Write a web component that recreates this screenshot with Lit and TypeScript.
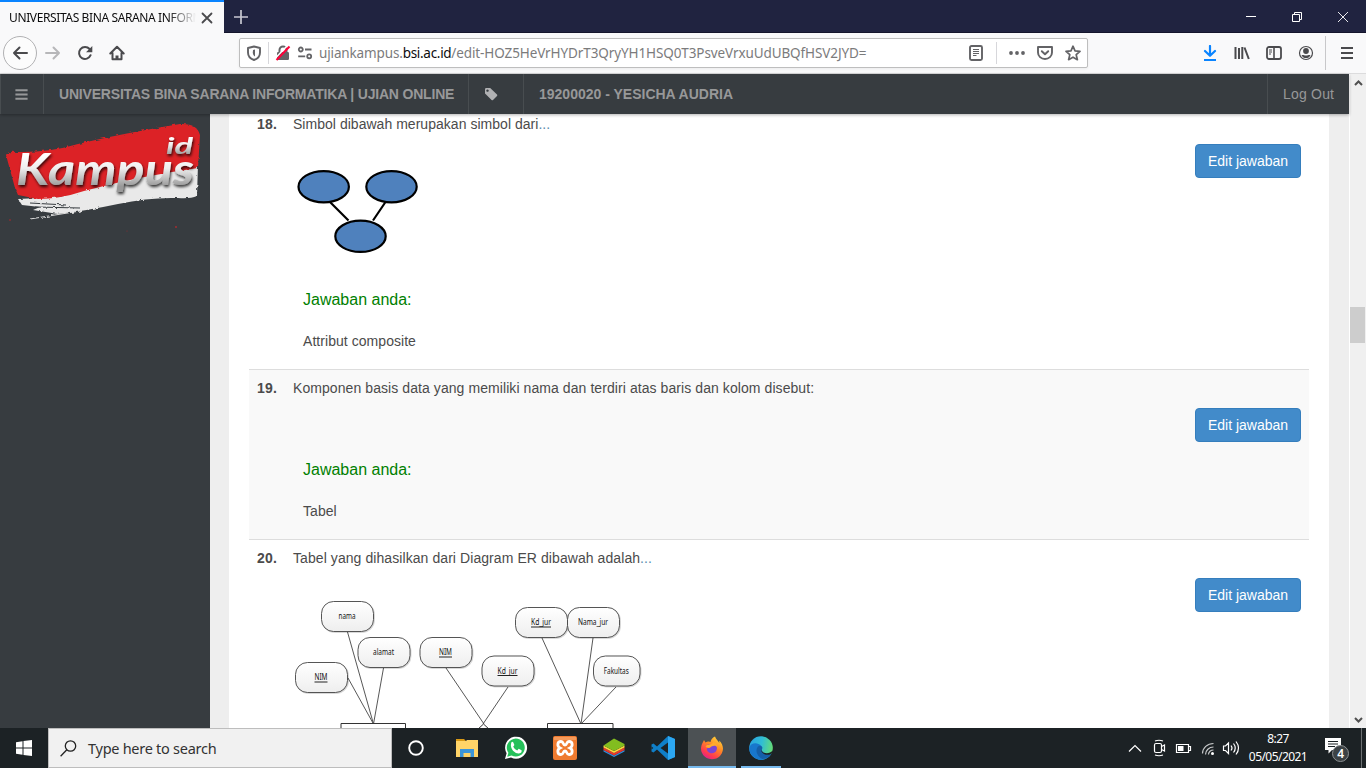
import { LitElement, html, svg, css } from "lit";
import { customElement } from "lit/decorators.js";

const icon = (body: unknown, size = 16, cls = "") => html`
  <svg class="ic ${cls}" width=${size} height=${size} viewBox="0 0 16 16">${body}</svg>
`;

const st = (d: string, w = 2, c = "currentColor") =>
  svg`<path d=${d} fill="none" stroke=${c} stroke-width=${w} stroke-linecap="round" stroke-linejoin="round"/>`;

const ICONS = {
  back: svg`${st("M15 8H2M7.5 2.5 2 8l5.500 5.500")}`,
  forward: svg`${st("M1 8h13M8.500 2.500 14 8l-5.500 5.500")}`,
  reload: svg`${st("M13.600 10.200A6 6 0 1 1 12.600 4")}<path d="M15.300 1v6.300H9z" fill="currentColor"/>`,
  home: svg`${st("M1.300 8.500 8 1.800l6.700 6.700M3.500 8v6.200h9V8")}<path d="M6.500 15v-4.500h3V15z" fill="currentColor"/>`,
  shield: svg`${st("M8 1.500 14 3V7.500C14 11.500 11 14 8 15 5 14 2 11.500 2 7.500V3z", 1.9)}<path d="M7 5 9 4.500v7c-1.500-.700-2.200-2.200-2.200-3.900z" fill="currentColor"/>`,
  lock: svg`<path d="M4.500 8V5a3.500 3.500 0 0 1 7 0v3" fill="none" stroke="currentColor" stroke-width="2"/><rect x="2" y="7" width="12" height="8" rx="1.200" fill="currentColor"/><path d="M0.500 13 12.500 .500" stroke="#fff" stroke-width="1.500"/><path d="M1.500 15 14.500 1.500" stroke="#ff0039" stroke-width="2"/>`,
  perms: svg`<g fill="none" stroke="currentColor" stroke-width="1.800"><circle cx="3.800" cy="4.500" r="2"/><path d="M8 4.500h6.500M1.200 11.300h7"/><circle cx="12.200" cy="11.300" r="2"/></g>`,
  reader: svg`<rect x="2" y="1" width="12" height="14" rx="1.500" fill="none" stroke="currentColor" stroke-width="1.900"/><path d="M5 4.500h6M5 6.500h6M5 8.500h6M5 10.500h3.500" stroke="currentColor"/>`,
  dots: svg`<g fill="currentColor"><circle cx="2" cy="8" r="1.900"/><circle cx="8" cy="8" r="1.900"/><circle cx="14" cy="8" r="1.900"/></g>`,
  pocket: svg`${st("M1 2h14v5.500a7 6.500 0 0 1-14 0z", 1.900)}${st("M4.800 6.200 8 9.300l3.200-3.100", 1.900)}`,
  star: svg`${st("M8 1.200 10 5.800l5 .500-3.800 3.400 1.200 5L8 12.200 3.600 14.700l1.200-5L1 6.300l5-.500z", 1.700)}`,
  download: svg`${st("M8 1v9.500M3 6l5 4.800L13 6", 2.200)}<path d="M2 15h12" stroke="currentColor" stroke-width="2"/>`,
  library: svg`<path d="M1.500 2v12M5 3v11M8.300 2v12M10.500 2.500l4.300 11.500" stroke="currentColor" stroke-width="2" fill="none"/>`,
  sidebar: svg`<rect x="1" y="2" width="14" height="12" rx="2" fill="none" stroke="currentColor" stroke-width="1.800"/><path d="M8 2v12" stroke="currentColor" stroke-width="1.600"/><path d="M3 5h3M3 7h3M3 9h2" stroke="currentColor"/>`,
  account: svg`<circle cx="8" cy="8" r="6.500" fill="none" stroke="currentColor" stroke-width="1.200"/><circle cx="8" cy="6" r="2.900" fill="currentColor"/><path d="M3.500 10.200c1.500-.800 2.500.300 4.500.300s3-1.100 4.500-.300C11.500 12.300 10 13 8 13s-3.500-.700-4.500-2.800z" fill="currentColor"/>`,
  menu: svg`<path d="M2 3h12M2 8h12M2 13h12" stroke="currentColor" stroke-width="1.900"/>`,
  bars: svg`<path d="M1.500 3.500h13M1.500 8h13M1.500 12.500h13" stroke="currentColor" stroke-width="2.100"/>`,
  tag: svg`<path fill-rule="evenodd" d="M1 3.200Q1 2 2.200 2h4l6.800 6.600q.700.700 0 1.400L9 14q-.700.700-1.400 0L1 7.500zM3.500 3.400a1.200 1.200 0 1 0 .01 0z" fill="currentColor"/>`,
  close: svg`${st("M3.500 3.500l9 9M12.500 3.500l-9 9", 1.800)}`,
  plus: svg`<path d="M8 1v14M1 8h14" stroke="currentColor" stroke-width="1.700"/>`,
  min: svg`<path d="M3 7.500h10" stroke="currentColor"/>`,
  restore: svg`<path d="M3.500 5.500h7v7h-7zM5.500 5V3.500h7v7H11" fill="none" stroke="currentColor"/>`,
  x: svg`<path d="M3 3l10 10M13 3 3 13" stroke="currentColor" stroke-width=".9"/>`,
};

@customElement("browser-chrome")
class BrowserChrome extends LitElement {
  static styles = css`
    :host { display: block; font-family: "Noto Sans", "Open Sans", sans-serif; color: #4a4a4d; }
    svg { display: block; flex: none; }
    .tabs { height: 33px; background: #202340; display: flex; align-items: stretch; box-shadow: inset 0 -1px #14152c; }
    .tab { width: 224px; box-sizing: border-box; background: #f9f9fa; border-top: 2px solid #0a84ff; padding: 0 9px; display: flex; align-items: center; }
    .title { width: 187px; height: 20px; line-height: 20px; overflow: hidden; white-space: nowrap; font-size: 12px; letter-spacing: -0.38px; color: #0c0c0d; margin-right: 3px; -webkit-mask-image: linear-gradient(90deg, #000 85%, transparent); mask-image: linear-gradient(90deg, #000 85%, transparent); }
    .new { color: #c8c8d2; display: flex; align-items: center; padding-left: 9px; flex: 1; }
    .win { width: 46px; display: grid; place-items: center; color: #fff; }
    .bar { height: 40px; background: #f9f9fa; border-bottom: 1px solid #dcdcdd; display: flex; align-items: center; gap: 16px; padding: 0 11px 0 3px; }
    .round { width: 32px; height: 32px; border: 1px solid #b1b1b3; border-radius: 50%; display: grid; place-items: center; background: #fcfcfc; }
    .fwd { margin-left: -8px; color: #b7b7b9; }
    .url { flex: 1; margin: 0 98px; height: 28px; border: 1px solid #bebebe; border-radius: 2px; background: #fff; box-shadow: 0 1px 3px rgba(0,0,0,.06); display: flex; align-items: center; gap: 6px; padding: 0 6px; color: #636366; }
    .sep { width: 1px; height: 22px; background: #d7d7db; }
    .addr { flex: 1; font-size: 13.500px; letter-spacing: -0.1px; color: #7b7b7c; white-space: nowrap; line-height: 20px; }
    .addr .sub { letter-spacing: -0.14px; }
    .addr b { font-weight: 400; color: #0c0c0d; letter-spacing: -0.3px; }
    .acts { display: flex; align-items: center; gap: 12px; }
    .dl { color: #0a84ff; }
    .bar > .sep { height: 34px; margin: 0 -3px 0 -5px; background: #c8c8ca; }
  `;
  render() {
    return html`
      <div class="tabs">
        <div class="tab"><span class="title">UNIVERSITAS BINA SARANA INFORMATIKA</span>${icon(ICONS.close)}</div>
        <div class="new">${icon(ICONS.plus)}</div>
        <div class="win">${icon(ICONS.min)}</div>
        <div class="win">${icon(ICONS.restore)}</div>
        <div class="win">${icon(ICONS.x)}</div>
      </div>
      <div class="bar">
        <span class="round">${icon(ICONS.back)}</span>
        ${icon(ICONS.forward, 16, "fwd")} ${icon(ICONS.reload)} ${icon(ICONS.home)}
        <div class="url">
          ${icon(ICONS.shield)}<span class="sep"></span>${icon(ICONS.lock)}${icon(ICONS.perms)}
          <span class="addr"><span class="sub">ujiankampus.</span><b>bsi.ac.id</b>/edit-HOZ5HeVrHYDrT3QryYH1HSQ0T3PsveVrxuUdUBQfHSV2JYD=</span>
          <div class="acts">${icon(ICONS.reader)}<span class="sep"></span>${icon(ICONS.dots)}${icon(ICONS.pocket)}${icon(ICONS.star)}</div>
        </div>
        ${icon(ICONS.download, 16, "dl")} ${icon(ICONS.library)} ${icon(ICONS.sidebar)} ${icon(ICONS.account)}
        <span class="sep"></span>${icon(ICONS.menu)}
      </div>
    `;
  }
}

@customElement("kampus-logo")
class KampusLogo extends LitElement {
  static styles = css`
    :host { display: block; }
    svg { display: block; }
    .word { font-family: "Lucida Handwriting", Lato, sans-serif; font-style: italic; font-weight: 700; }
  `;
  render() {
    return html`<svg width="210" height="126" viewBox="0 114 210 126">
      <defs>
        <linearGradient id="silver" x1="0" y1="0" x2="0" y2="1">
          <stop offset=".25" stop-color="#fff"/><stop offset=".5" stop-color="#eee"/><stop offset=".85" stop-color="#999"/>
        </linearGradient>
        <filter id="rough" x="-5%" y="-5%" width="110%" height="110%">
          <feTurbulence type="fractalNoise" baseFrequency=".25" numOctaves="2" seed="4"/>
          <feDisplacementMap in="SourceGraphic" scale="3"/>
        </filter>
        <filter id="shade" x="-10%" y="-20%" width="125%" height="150%">
          <feDropShadow dx="1" dy="2" stdDeviation="1.500" flood-color="#000" flood-opacity=".8"/>
        </filter>
      </defs>
      <g filter="url(#rough)">
        <path d="M18 199 60 197 78 191Q135 175 198 164L197 196Q190 199 178 198 150 197 118 204 85 211 58 214L33 210 40 207 22 205z" fill="#e9e9e9"/>
        <path d="M6 155Q8 151 16 152 48 153 78 144 120 134 180 124 197 123 200 135L198 168Q140 176 84 191 60 199 38 199L18 195 15 188z" fill="#dc2426"/>
        <path d="M35 207 80 208M30 203 66 205" stroke="#373c40" stroke-width="1.200" fill="none"/>
        <path d="M30 219 80 211" stroke="#ddd" stroke-width="1"/>
      </g>
      <circle cx="176" cy="227" r="1" fill="#a52c30"/><circle cx="10" cy="220" r=".9" fill="#8c2c30"/><circle cx="127" cy="231" r=".6" fill="#8c2c30"/>
      <g class="word" fill="url(#silver)" filter="url(#shade)">
        <text x="16" y="185" font-size="43" textLength="178" lengthAdjust="spacingAndGlyphs">Kampus</text>
        <text x="166" y="154" font-size="23" textLength="27" lengthAdjust="spacingAndGlyphs">id</text>
      </g>
    </svg>`;
  }
}

interface Bubble { x: number; y: number; w: number; label: string; key?: boolean; tw: number }
const BUBBLES: Bubble[] = [
  { x: 321.5, y: 601.5, w: 52, label: "nama", tw: 17 },
  { x: 358, y: 637.5, w: 52, label: "alamat", tw: 21 },
  { x: 295.5, y: 662.5, w: 52, label: "NIM", key: true, tw: 13 },
  { x: 420, y: 637.5, w: 52, label: "NIM", key: true, tw: 13 },
  { x: 482, y: 656, w: 52, label: "Kd_jur", key: true, tw: 20 },
  { x: 515.5, y: 607.5, w: 52, label: "Kd_jur", key: true, tw: 20 },
  { x: 567.5, y: 607.5, w: 52, label: "Nama_jur", tw: 30 },
  { x: 593.5, y: 656, w: 46.5, label: "Fakultas", tw: 25 },
];

@customElement("er-diagram")
class ErDiagram extends LitElement {
  static styles = css`
    :host { display: block; }
    svg { display: block; }
    text { font-family: "Noto Sans", "Open Sans", sans-serif; font-size: 9px; fill: #111; }
  `;
  render() {
    return html`<svg width="360" height="150" viewBox="293 578 360 150">
      <defs>
        <linearGradient id="g" x1="0" y1="0" x2="0" y2="1"><stop offset="0" stop-color="#fff"/><stop offset="1" stop-color="#eee"/></linearGradient>
        <filter id="s" x="-10%" y="-10%" width="125%" height="130%"><feDropShadow dx=".8" dy=".8" stdDeviation=".7" flood-opacity=".2"/></filter>
      </defs>
      <path d="M347.500 632 373.500 724M348 678 373.500 724 383.500 668M446 668 484 724M508 687 483 724M542 638 581 724 593 638M616 687 581 724" fill="none" stroke="#444" stroke-width=".9"/>
      ${BUBBLES.map(b => svg`
        <rect x=${b.x} y=${b.y} width=${b.w} height="30" rx="12" fill="url(#g)" stroke="#444" stroke-width=".9" filter="url(#s)"/>
        <text x=${b.x + b.w / 2 - b.tw / 2 - 0.5} y=${b.y + 17.5} textLength=${b.tw} lengthAdjust="spacingAndGlyphs">${b.label}</text>
        ${b.key ? svg`<path d="M${b.x + b.w / 2 - b.tw / 2 - 0.5} ${b.y + 19.5}h${b.tw}" stroke="#222"/>` : ""}`)}
      <path d="M341 730V723.500h64.500v6.500M547.500 730v-6.500h65.500v6.500M477 730l6.500-6 6.500 6" fill="#fff" stroke="#333"/>
    </svg>`;
  }
}

@customElement("composite-diagram")
class CompositeDiagram extends LitElement {
  static styles = css`:host, svg { display: block; }`;
  render() {
    return html`<svg width="140" height="128" viewBox="293 144 140 128">
      <g stroke="#000" stroke-width="2.200" fill="#4f81bd">
        <path d="M330 202 348.500 220.500M385.500 202 373 220.500"/>
        <ellipse cx="323.700" cy="186.700" rx="25.200" ry="15.600"/>
        <ellipse cx="391.500" cy="186.700" rx="25.200" ry="15.600"/>
        <ellipse cx="360.500" cy="236.300" rx="25.200" ry="15.600"/>
      </g>
    </svg>`;
  }
}

@customElement("exam-page")
class ExamPage extends LitElement {
  static styles = css`
    :host { display: flex; min-height: 0; font-family: "Liberation Sans", Arial, sans-serif; font-size: 14px; line-height: 20px; color: #4b4b4b; }
    svg { display: block; }
    .site { flex: 1; min-width: 0; display: flex; flex-direction: column; }
    .nav { height: 40px; flex: none; background: #373c40; color: #979899; display: flex; box-shadow: 0 1px 3px rgba(0,0,0,.3); z-index: 1; font-weight: 700; white-space: nowrap; }
    .nav > * { box-sizing: border-box; display: flex; align-items: center; border-right: 1px solid #484d50; }
    .burger { width: 44px; padding-left: 13px; border-left: 1px solid #484d50; }
    .brand { width: 425px; padding-left: 15px; }
    .brand span { letter-spacing: -0.19px; }
    .tag { width: 55px; padding-left: 15px; color: #b0b1b3; }
    .user { flex: 1; padding-left: 15px; }
    .out { width: 81px; padding-left: 15px; font-weight: 400; border-right: 0 !important; letter-spacing: .2px; }
    .cols { flex: 1; min-height: 0; display: flex; background: #eee; }
    .side { width: 210px; background: #373c40; }
    .main { flex: 1; margin: 0 20px 0 19px; background: #fff; padding: 0 20px; overflow: hidden; }
    .list { margin-top: -9px; }
    .q { border-top: 1px solid #ddd; padding: 8px; display: grid; grid-template-columns: 36px 1fr; }
    .q b { letter-spacing: .2px; }
    .text { letter-spacing: .075px; }
    .text.short { letter-spacing: .03px; }
    .alt { background: #f9f9f9; }
    .media { display: flex; justify-content: space-between; align-items: flex-start; margin-top: 10px; }
    .btn { font: inherit; color: #fff; background: #428bca; border: 1px solid #357ebd; border-radius: 4px; height: 34px; width: 106px; padding: 0; margin-left: auto; }
    .head { margin: 19px 0 0 10px; font-size: 16px; line-height: 18px; color: #008000; }
    .ans { margin: 22px 0 10px 10px; letter-spacing: .05px; }
    .el { color: #5a8cae; }
    .scroll { width: 16px; border-left: 1px solid #fff; background: #f0f0f0; display: flex; flex-direction: column; align-items: center; justify-content: space-between; }
    .track { flex: 1; width: 100%; padding-top: 216px; }
    .thumb { height: 36px; width: 15px; background: #cdcdcd; }
  `;
  private question(no: string, text: string, media: unknown, answer = "", alt = false) {
    const dots = text.endsWith("...");
    return html`<div class="q ${alt ? "alt" : ""}">
      <b>${no}.</b>
      <div>
        <div class="text ${text.length < 45 ? "short" : ""}">${dots ? html`${text.slice(0, -3)}<span class="el">...</span>` : text}</div>
        <div class="media">${media}<button class="btn">Edit jawaban</button></div>
        ${answer ? html`<div class="head">Jawaban anda:</div><div class="ans">${answer}</div>` : ""}
      </div>
    </div>`;
  }
  private arrow(d: string) {
    return html`<svg width="15" height="17" viewBox="0 0 15 17"><path d=${d} fill="none" stroke="#505050" stroke-width="2"/></svg>`;
  }
  render() {
    return html`
      <div class="site">
        <div class="nav">
          <div class="burger">${icon(ICONS.bars, 15)}</div>
          <div class="brand"><span>UNIVERSITAS BINA SARANA INFORMATIKA | UJIAN ONLINE</span></div>
          <div class="tag">${icon(ICONS.tag)}</div>
          <div class="user">19200020 - YESICHA AUDRIA</div>
          <div class="out">Log Out</div>
        </div>
        <div class="cols">
          <div class="side"><kampus-logo></kampus-logo></div>
          <div class="main"><div class="list">
            ${this.question("18", "Simbol dibawah merupakan simbol dari...", html`<composite-diagram></composite-diagram>`, "Attribut composite")}
            ${this.question("19", "Komponen basis data yang memiliki nama dan terdiri atas baris dan kolom disebut:", "", "Tabel", true)}
            ${this.question("20", "Tabel yang dihasilkan dari Diagram ER dibawah adalah...", html`<er-diagram></er-diagram>`)}
          </div></div>
        </div>
      </div>
      <div class="scroll">
        ${this.arrow("M4 11 7.500 7.500 11 11")}
        <div class="track"><div class="thumb"></div></div>
        ${this.arrow("M4 7 7.500 10.500 11 7")}
      </div>
    `;
  }
}

const APPS = {
  cortana: svg`<circle cx="12" cy="12" r="6.800" fill="none" stroke="#fff" stroke-width="1.900"/>`,
  folder: svg`<path d="M1 3h8l2 2h-10z" fill="#d99a16"/><path d="M1 5h10l1-1h11v17H1z" fill="#ffd468"/><path d="M5 13h14v8h-3.500v-4h-7v4H5z" fill="#3b95d9"/>`,
  whatsapp: svg`<path d="M1 23l1.600-5.800A11 11 0 1 1 7 21.400z" fill="#fff"/><path d="M3.200 20.800l1.200-4A9 9 0 1 1 7.600 19.600z" fill="#25c05a"/><path d="M7.300 6.500q1-1.200 1.900-.200l1.200 2.700-1.200 1.700q1.400 2.700 4 3.800l1.500-1.700 2.900 1.500q.500 2.800-2.600 3.200-3 .300-6-2.800Q6 11 7.300 6.500z" fill="#fff"/>`,
  xampp: svg`<rect x="0" y="0" width="24" height="24" rx="2" fill="#ef7b30"/><path d="M1 1h22v3H1z" fill="#f49b5c"/><path d="M8 5.500C4 5.500 4 10.500 7 12c-3 1.500-3 6.500 1 6.500 3 0 1.500-3.500 4-3.500s1 3.500 4 3.500c4 0 4-5 1-6.500 3-1.500 3-6.500-1-6.500-3 0-1.500 3.500-4 3.500s-1-3.500-4-3.500z" fill="none" stroke="#fff" stroke-width="2.800"/>`,
  bluestacks: svg`<path d="M1.500 14 12 19.500 22.500 14v1.500L12 21 1.500 15.500z" fill="#2b8fe0"/><path d="M1.500 11.500 12 17l10.500-5.500v2.500L12 19.500 1.500 14z" fill="#e5382c"/><path d="M1.500 9.500 12 15l10.500-5.500v2L12 17 1.500 11.500z" fill="#ffd23e"/><path d="M12 2.500 22.500 8v1.500L12 15 1.500 9.500z" fill="#82bd1f"/>`,
  code: svg`<path d="M17 0 24 3v18l-7 3L6 13.500 2.500 16.500.500 15.500V8.500l2-1L6 10.500z" fill="#0f7fc8"/><path d="M17 6.500v11L9.500 12z" fill="#1c2225"/><path d="M.500 10.500v3L2.300 12z" fill="#1c2225"/><path d="M17 0l7 3v18l-7 3z" fill="#2ca7f2"/>`,
  firefox: svg`<path d="M15 .500c1 2.800 3.200 4.500 4.300 6.500V4.500c2.500 2.500 3.700 5.500 3.700 8.300A11 10.800 0 1 1 2.500 7L4 4l1.500 2.500C8 5 9.500 5.500 10.500 6 11 3 13 1.500 15 .500z" fill="url(#ff)"/><path d="M7 9c1.500-1 3-.500 4 .500 1.200-2 4-2 5.200.3 2 3-.2 7.500-4.200 7.500-3.500 0-5.700-2.800-5-5l3.200-.500c1-.800 0-1.600-1.400-1.500z" fill="#7b45d4"/><path d="M7 9c3 0 5.500-1 6.500-3 4 2 5 6 2.500 9.500 4-5-1-7-4.500-5L9 12 5.500 11z" fill="#ffab2d"/>`,
  edge: svg`<circle cx="12" cy="12" r="11.800" fill="url(#ed)"/><path d="M.200 12C1.500 7.500 6 6.500 9.500 8c2.500 1 4 3 3.500 4.500-.800 1-1 3.500 1.500 5 2.500 1.200 5.500 1 8 0A11.800 11.800 0 0 1 .200 12z" fill="#1877cc"/><path d="M9 10.500c-3.500 4.500-.500 10 4.500 12.500 4 0 7-2.500 9-5.500-3 1.500-7 1-9-1.500-1.300-1.500-1-3 0-4C13 10 10.500 9 9 10.500z" fill="#155fa8"/><path d="M13 12c-1 1.500-.500 3.500 1.500 4.500 3 1.500 7 .800 9-2l.500 2-2 1.500c-3 1.500-7 1-8.800-1.500-1.200-1.500-1-3.300-.200-4.500z" fill="#1c2225"/>`,
};

@customElement("task-bar")
class TaskBar extends LitElement {
  static styles = css`
    :host { display: flex; height: 40px; background: #1c2225; font-family: "Noto Sans", "Open Sans", sans-serif; color: #fff; }
    svg { display: block; flex: none; }
    .start { width: 48px; display: grid; place-items: center; }
    .search { width: 344px; box-sizing: border-box; border: 1px solid #bdbdbd; background: #f1f1f1; display: flex; align-items: center; gap: 11px; padding-left: 11px; color: #333; font-size: 14.500px; letter-spacing: -0.27px; }
    .apps { display: flex; gap: 1px; flex: 1; }
    .app { width: 48px; box-sizing: border-box; display: grid; place-items: center; }
    .app:first-child { margin-right: 2px; }
    .on { background: #4c5154; box-shadow: inset 0 -2px #76b9ed; }
    .run { background: linear-gradient(#76b9ed, #76b9ed) center bottom / 40px 2px no-repeat; }
    .tray { display: flex; align-items: center; }
    .clock { width: 64px; margin-left: 2px; text-align: center; font-size: 12px; line-height: 18px; letter-spacing: -0.55px; white-space: nowrap; }
    .note { margin-left: 15px; margin-right: 11px; }
    .peek { width: 1px; height: 40px; background: #6c7072; margin-right: 4px; }
    text { font-size: 12px; font-weight: 600; }
  `;
  render() {
    const app = (b: unknown, cls = "") => html`<div class="app ${cls}"><svg width="24" height="24" viewBox="0 0 24 24">
      <defs>
        <linearGradient id="ff" x1=".9" y1="0" x2=".3" y2="1"><stop offset="0" stop-color="#ffe23f"/><stop offset=".45" stop-color="#ff8a24"/><stop offset=".8" stop-color="#ff3b4e"/><stop offset="1" stop-color="#e0218c"/></linearGradient>
        <linearGradient id="ed" x1="0" y1=".3" x2="1" y2=".5"><stop offset="0" stop-color="#2aa3e0"/><stop offset=".5" stop-color="#30bdd5"/><stop offset="1" stop-color="#65dd74"/></linearGradient>
      </defs>${b}</svg></div>`;
    return html`
      <div class="start"><svg width="16" height="16" viewBox="0 0 16 16"><path d="M0 2.200 6.500 1.300v6.200H0zM7.500 1.100 16 0v7.500H7.500zM0 8.500h6.500v6.200L0 13.800zM7.500 8.500H16V16l-8.500-1.100z" fill="#fff"/></svg></div>
      <div class="search"><svg width="17" height="17" viewBox="0 0 17 17"><circle cx="10.500" cy="6" r="5.200" fill="none" stroke="#222" stroke-width="1.300"/><path d="M6.800 9.800.600 16.200" stroke="#222" stroke-width="1.300"/></svg><span>Type here to search</span></div>
      <div class="apps">
        ${app(APPS.cortana)}${app(APPS.folder)}${app(APPS.whatsapp)}${app(APPS.xampp)}${app(APPS.bluestacks)}${app(APPS.code)}${app(APPS.firefox, "on")}${app(APPS.edge, "run")}
      </div>
      <div class="tray">
        <svg width="116" height="24" viewBox="1128 736 116 24" fill="none" stroke="#fff" stroke-width="1.200">
          <path d="M1129 751.500 1135 745.500 1141 751.500"/>
          <rect x="1154.500" y="743.500" width="7" height="9" rx="1.500"/><path d="M1161.500 746.500l3-1.500v6l-3-1.500M1155 741q4-1.500 8 0M1155 755q4 1.500 8 0"/>
          <path d="M1176.500 744.500h12v8h-12zM1189 746.500h1.500v4H1189"/><path d="M1178 746h5.500v5h-5.500z" fill="#fff" stroke="none"/>
          <path d="M1202.500 753.500a11 10 0 0 1 11-10M1205.500 754.500a8 7.500 0 0 1 8-7.500M1208.500 754.500a5 4.500 0 0 1 5-4.500" stroke="#c8cacb"/><circle cx="1212.500" cy="753.500" r="1.500" fill="#fff" stroke="none"/>
          <path d="M1223.500 746h2l3-3v10.500l-3-3h-2zM1231 745.500q2 2.500 0 5M1233.500 743.500q3.500 4.500 0 9M1236 741.500q5 6.500 0 13"/>
        </svg>
        <div class="clock">8:27<br>05/05/2021</div>
        <svg class="note" width="25" height="30" viewBox="1325 735 25 30"><path d="M1325 740h16v12h-9l-3.500 3.500V752h-3.500z" fill="#fff"/><path d="M1328 743.500h10M1328 746h10M1328 748.500h7" stroke="#1c2225" stroke-width="1.100"/><circle cx="1340.500" cy="755.500" r="8" fill="#3c4245" stroke="#8d9193"/><text x="1337.200" y="760" fill="#fff">4</text></svg>
        <span class="peek"></span>
      </div>
    `;
  }
}

@customElement("app-root")
class AppRoot extends LitElement {
  static styles = css`
    :host { display: flex; flex-direction: column; width: 1366px; height: 768px; overflow: hidden; background: #fff; }
    .page { flex: 1; }
  `;
  render() {
    return html`<browser-chrome></browser-chrome><exam-page class="page"></exam-page><task-bar></task-bar>`;
  }
}
